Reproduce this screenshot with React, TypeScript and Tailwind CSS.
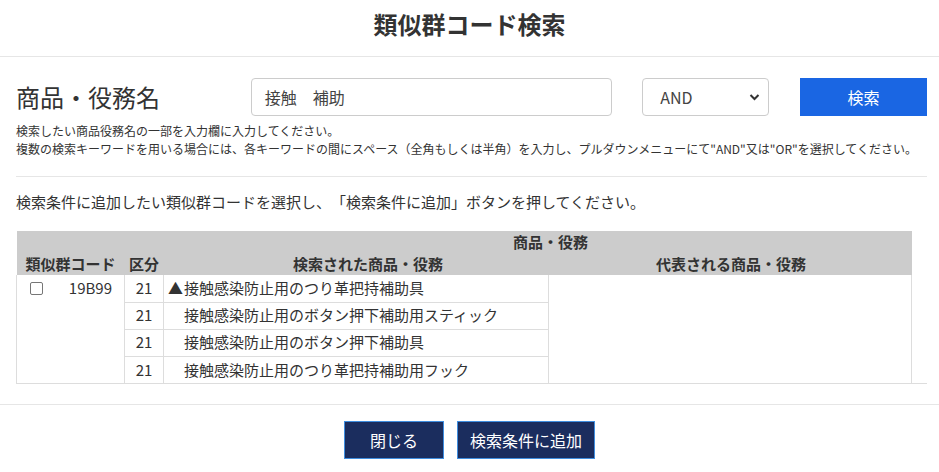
import React from "react";

const font = { fontFamily: '"Noto Sans CJK JP", "Noto Sans", sans-serif' };

const items = [
  { mark: true, text: "接触感染防止用のつり革把持補助具" },
  { mark: false, text: "接触感染防止用のボタン押下補助用スティック" },
  { mark: false, text: "接触感染防止用のボタン押下補助具" },
  { mark: false, text: "接触感染防止用のつり革把持補助用フック" },
];

export default function App() {
  return (
    <div className="w-[939px] h-[472px] bg-white text-[#333] overflow-hidden [text-spacing-trim:space-all]" style={font}>
      <div className="h-[57px] border-b border-[#e6e6e6] flex items-center justify-center">
        <h1 className="text-[24px] font-bold leading-none -mt-[8px] text-[#333]">類似群コード検索</h1>
      </div>

      <div className="pl-[16px] pr-[12px]">
        <div className="flex items-center mt-[21px] h-[38px]">
          <div className="w-[235px] text-[24px] leading-none text-[#333]">商品・役務名</div>
          <div className="w-[362px] h-[38px] border border-[#ccc] rounded-[4px] flex items-center pl-[13px] text-[16px] text-[#444]">
            接触　補助
          </div>
          <div className="ml-[30px] w-[127px] h-[38px] border border-[#ccc] rounded-[4px] flex items-center justify-between pl-[17px] pr-[8px] text-[16px] text-[#444]">
            <span>AND</span>
            <svg width="11" height="8" viewBox="0 0 11 8">
              <path d="M1.5 2 L5.5 6 L9.5 2" fill="none" stroke="#333" strokeWidth="2" />
            </svg>
          </div>
          <div className="ml-[31px] w-[127px] h-[38px] bg-[#1a66e3] text-white text-[16px] flex items-center justify-center">
            検索
          </div>
        </div>

        <div className="mt-[6px] text-[12px] leading-[18px] text-[#333]">
          <div>検索したい商品役務名の一部を入力欄に入力してください。</div>
          <div>複数の検索キーワードを用いる場合には、各キーワードの間にスペース（全角もしくは半角）を入力し、プルダウンメニューにて"AND"又は"OR"を選択してください。</div>
        </div>

        <div className="mt-[18px] border-t border-[#e6e6e6]" />

        <div className="mt-[15px] text-[15px] leading-[20px] text-[#333]">
          検索条件に追加したい類似群コードを選択し、「検索条件に追加」ボタンを押してください。
        </div>

        <div className="mt-[19px] w-[911px] border-b border-[#ddd]">
          <table className="w-[895px] border-collapse table-fixed text-[15px]">
            <colgroup>
              <col className="w-[108px]" />
              <col className="w-[39px]" />
              <col className="w-[385px]" />
              <col className="w-[363px]" />
            </colgroup>
            <thead className="bg-[#cccccc]">
              <tr className="h-[22px]">
                <th className="p-0" />
                <th className="p-0" />
                <th colSpan={2} className="p-0 pl-[26px] font-bold text-center leading-[22px]">商品・役務</th>
              </tr>
              <tr className="h-[22px]">
                <th className="p-0 font-bold text-center leading-[22px] whitespace-nowrap">類似群コード</th>
                <th className="p-0 font-bold text-center leading-[22px]">区分</th>
                <th className="p-0 pl-[24px] font-bold text-center leading-[22px]">検索された商品・役務</th>
                <th className="p-0 pl-[2px] font-bold text-center leading-[22px]">代表される商品・役務</th>
              </tr>
            </thead>
            <tbody>
              {items.map((it, i) => (
                <tr key={i} className="h-[27px]">
                  {i === 0 && (
                    <td rowSpan={4} className="p-0 align-top border-l border-r border-[#ddd]">
                      <div className="flex items-center h-[26px] pl-[13px] pr-[12px]">
                        <span className="w-[13px] h-[13px] border border-[#767676] rounded-[2px] bg-white" />
                        <span className="ml-auto">19B99</span>
                      </div>
                    </td>
                  )}
                  <td className={"p-0 text-center border-r border-[#ddd] " + (i < 3 ? "border-b" : "")}>21</td>
                  <td className={"p-0 pl-[4px] border-r border-[#ddd] whitespace-nowrap " + (i < 3 ? "border-b" : "")}>
                    <span className="inline-block w-[16px]">{it.mark ? "▲" : ""}</span>
                    {it.text}
                  </td>
                  {i === 0 && <td rowSpan={4} className="p-0 border-r border-[#ddd]" />}
                </tr>
              ))}
            </tbody>
          </table>
        </div>
      </div>

      <div className="mt-[20px] border-t border-[#e6e6e6] flex justify-center gap-[13px] pt-[16px]">
        <div className="w-[100px] h-[38px] bg-[#1b2d5e] border border-[#3f8ee0] text-white text-[16px] flex items-center justify-center">
          閉じる
        </div>
        <div className="w-[138px] h-[38px] bg-[#1b2d5e] border border-[#3f8ee0] text-white text-[16px] flex items-center justify-center">
          検索条件に追加
        </div>
      </div>
    </div>
  );
}
